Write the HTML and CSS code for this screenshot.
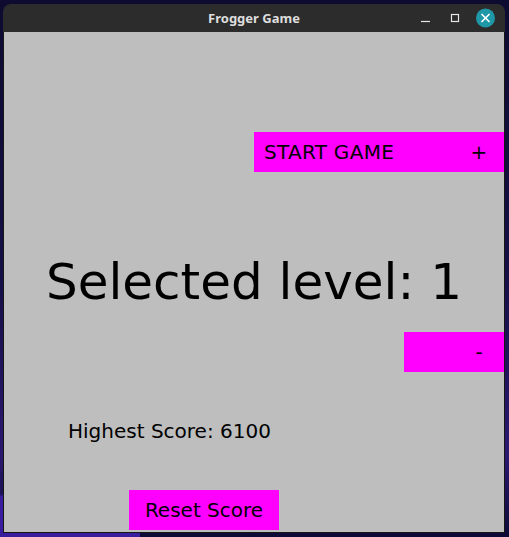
FILE: index.html
```html
<!DOCTYPE html>
<html>
<head>
<meta charset="utf-8">
<link rel="stylesheet" href="styles.css">
</head>
<body>
<div class="desktop">
  <div class="window">
    <div class="titlebar">
      <div></div>
      <div class="title">Frogger Game</div>
      <div class="controls">
        <svg width="76" height="28" viewBox="0 0 76 28">
          <line x1="1" y1="17.5" x2="10" y2="17.5" stroke="#e6e6e6" stroke-width="1.2"/>
          <rect x="31.5" y="10.5" width="7" height="7" fill="none" stroke="#e6e6e6" stroke-width="1.2"/>
          <circle cx="65.5" cy="14" r="9.5" fill="#1e98a6"/>
          <line x1="61.5" y1="10" x2="69.5" y2="18" stroke="#ffffff" stroke-width="1.6"/>
          <line x1="69.5" y1="10" x2="61.5" y2="18" stroke="#ffffff" stroke-width="1.6"/>
        </svg>
      </div>
    </div>
    <div class="frame">
      <div class="content">
        <div class="btn btn-start"><span>START GAME</span><span class="sign">+</span></div>
        <div class="level">Selected level: 1</div>
        <div class="btn btn-minus"><span class="sign">-</span></div>
        <div class="score">Highest Score: 6100</div>
        <div class="btn btn-reset">Reset Score</div>
      </div>
    </div>
  </div>
</div>
</body>
</html>
```

FILE: styles.css
```css
html, body {
  margin: 0;
  padding: 0;
}
.desktop {
  width: 509px;
  height: 537px;
  overflow: hidden;
  background:
    linear-gradient(165deg, rgba(0,0,0,0) 0%, rgba(0,0,0,0) 86%, #3a1d9e 86.5%, #3a1d9e 100%) ,
    linear-gradient(180deg, #0e0b30 0%, #150f45 50%, #2a1870 85%, #0c0a36 100%);
  background-size: 140px 537px, 100% 100%;
  background-repeat: no-repeat;
  padding-top: 4px;
  padding-left: 3px;
  box-sizing: border-box;
}
.window {
  width: 502px;
}
.titlebar {
  height: 28px;
  background: #2c2c2c;
  border-radius: 8px 8px 0 0;
  display: grid;
  grid-template-columns: 1fr auto 1fr;
  align-items: center;
}
.title {
  font-family: "Noto Sans", "DejaVu Sans", sans-serif;
  font-weight: bold;
  font-size: 13px;
  color: #dedede;
  line-height: 28px;
}
.controls {
  display: flex;
  justify-content: flex-end;
  padding-right: 9px;
}
.controls svg {
  display: block;
}
.frame {
  border: 1px solid #161616;
  border-top: 0;
  width: 500px;
}
.content {
  width: 500px;
  height: 500px;
  background: #bebebe;
  overflow: hidden;
  font-family: "DejaVu Sans", sans-serif;
  color: #000;
  display: flex;
  flex-direction: column;
  align-items: flex-start;
}
.btn {
  background: #ff00ff;
  height: 40px;
  font-size: 20px;
  display: flex;
  align-items: center;
  box-sizing: border-box;
  flex: none;
}
.btn-start {
  margin-top: 100px;
  margin-left: 250px;
  width: 250px;
  padding-left: 10px;
  justify-content: space-between;
  letter-spacing: 0.3px;
}
.sign {
  width: 30px;
  text-align: center;
  margin-right: 10px;
  letter-spacing: 0;
}
.level {
  margin-top: 80px;
  width: 500px;
  text-align: center;
  font-size: 50px;
  line-height: 60px;
}
.btn-minus {
  margin-top: 20px;
  margin-left: 400px;
  width: 100px;
  justify-content: flex-end;
}
.score {
  margin-top: 47px;
  margin-left: 64px;
  font-size: 20px;
  line-height: 24px;
}
.btn-reset {
  margin-top: 47px;
  margin-left: 125px;
  width: 150px;
  justify-content: center;
}
```
